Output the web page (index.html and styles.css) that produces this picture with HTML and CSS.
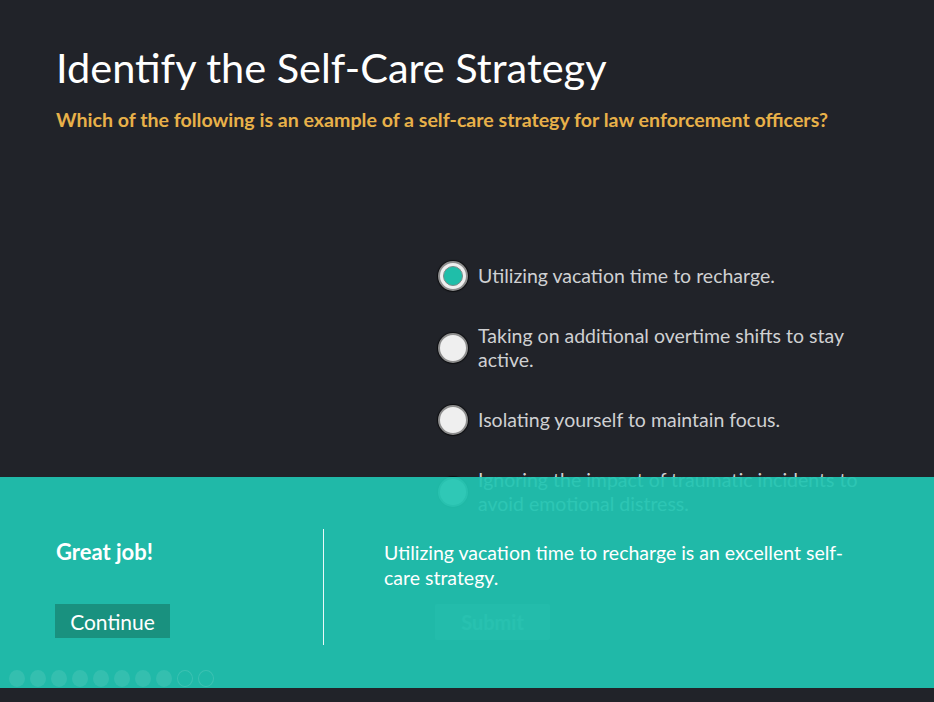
FILE: index.html
```html
<!DOCTYPE html>
<html lang="en">
<head>
<meta charset="utf-8">
<title>Identify the Self-Care Strategy</title>
<link rel="stylesheet" href="styles.css">
</head>
<body>
<div class="stage">
  <main class="slide">
    <h1 class="title">Identify the Self-Care Strategy</h1>
    <p class="question">Which of the following is an example of a self-care strategy for law enforcement officers?</p>
    <ul class="options">
      <li class="option selected"><span class="radio"><span class="dot"></span></span><span class="label">Utilizing vacation time to recharge.</span></li>
      <li class="option"><span class="radio"></span><span class="label">Taking on additional overtime shifts to stay active.</span></li>
      <li class="option"><span class="radio"></span><span class="label">Isolating yourself to maintain focus.</span></li>
      <li class="option"><span class="radio"></span><span class="label">Ignoring the impact of traumatic incidents to avoid emotional distress.</span></li>
    </ul>
    <div class="actions"><button class="submit" type="button">Submit</button></div>
  </main>
  <section class="feedback">
    <div class="fb-body">
      <div class="fb-left">
        <h2 class="fb-title">Great job!</h2>
        <button class="continue" type="button">Continue</button>
      </div>
      <div class="fb-divider"></div>
      <p class="fb-text">Utilizing vacation time to recharge is an excellent self-care strategy.</p>
    </div>
    <div class="progress">
      <span class="pip done"></span><span class="pip done"></span><span class="pip done"></span><span class="pip done"></span><span class="pip done"></span><span class="pip done"></span><span class="pip done"></span><span class="pip done"></span><span class="pip"></span><span class="pip"></span>
    </div>
  </section>
</div>
</body>
</html>
```
FILE: styles.css
```css
* { box-sizing: border-box; }
html, body { margin: 0; padding: 0; }
body {
  background: #212329;
  font-family: Lato, "Open Sans", sans-serif;
  width: 934px;
  height: 702px;
  overflow: hidden;
}
.stage {
  position: relative;
  height: 688px;
}
.slide {
  padding: 43px 0 0 56px;
}
.title {
  margin: 0;
  font-weight: 400;
  font-size: 41.5px;
  line-height: 48px;
  color: #ffffff;
}
.question {
  margin: 17px 0 0;
  font-weight: 700;
  font-size: 19.6px;
  line-height: 24px;
  color: #e8b149;
}
.options {
  list-style: none;
  margin: 129px 0 0 382px;
  padding: 0;
  width: 430px;
  display: flex;
  flex-direction: column;
  gap: 33px;
}
.option {
  display: flex;
  align-items: center;
  gap: 10px;
}
.radio {
  flex: none;
  width: 30px;
  height: 30px;
  border-radius: 50%;
  background: #efefef;
  border: 2px solid #8e8e8e;
  box-shadow: 0 0 1px 1px rgba(0,0,0,0.6);
  display: flex;
  align-items: center;
  justify-content: center;
}
.dot {
  width: 20px;
  height: 20px;
  border-radius: 50%;
  background: #1fbea9;
  border: 1px solid #7a8a88;
}
.label {
  font-size: 19.5px;
  line-height: 24px;
  color: #cfd0d2;
}
.actions {
  margin: 88px 0 0 379px;
}
.submit {
  width: 115px;
  height: 36px;
  border: 0;
  border-radius: 2px;
  background: #4a5058;
  color: #8c9096;
  font-family: inherit;
  font-size: 20px;
  font-weight: 700;
}
.feedback {
  position: absolute;
  left: 0;
  right: 0;
  top: 477px;
  height: 211px;
  background: rgba(32, 197, 178, 0.93);
  display: flex;
  flex-direction: column;
}
.fb-body {
  display: flex;
  padding-top: 52px;
}
.fb-left {
  width: 323px;
  padding-left: 56px;
  display: flex;
  flex-direction: column;
  align-items: flex-start;
}
.fb-title {
  margin: 10px 0 0;
  font-size: 22px;
  line-height: 26px;
  font-weight: 700;
  color: #ffffff;
}
.continue {
  margin-top: 39px;
  margin-left: -1px;
  width: 115px;
  height: 34px;
  border: 0;
  background: #19917f;
  color: #ffffff;
  font-family: inherit;
  font-size: 21px;
  padding: 0;
}
.fb-divider {
  width: 1px;
  height: 116px;
  background: #ffffff;
  opacity: 0.9;
}
.fb-text {
  margin: 11px 0 0 60px;
  width: 470px;
  font-size: 19.5px;
  line-height: 25px;
  color: #ffffff;
}
.progress {
  margin-top: auto;
  padding: 0 0 1px 9px;
  display: flex;
  gap: 5px;
}
.pip {
  width: 16px;
  height: 17px;
  border-radius: 50%;
  border: 1px solid rgba(255,255,255,0.12);
}
.pip.done {
  background: rgba(255,255,255,0.09);
  border-color: transparent;
}
```
